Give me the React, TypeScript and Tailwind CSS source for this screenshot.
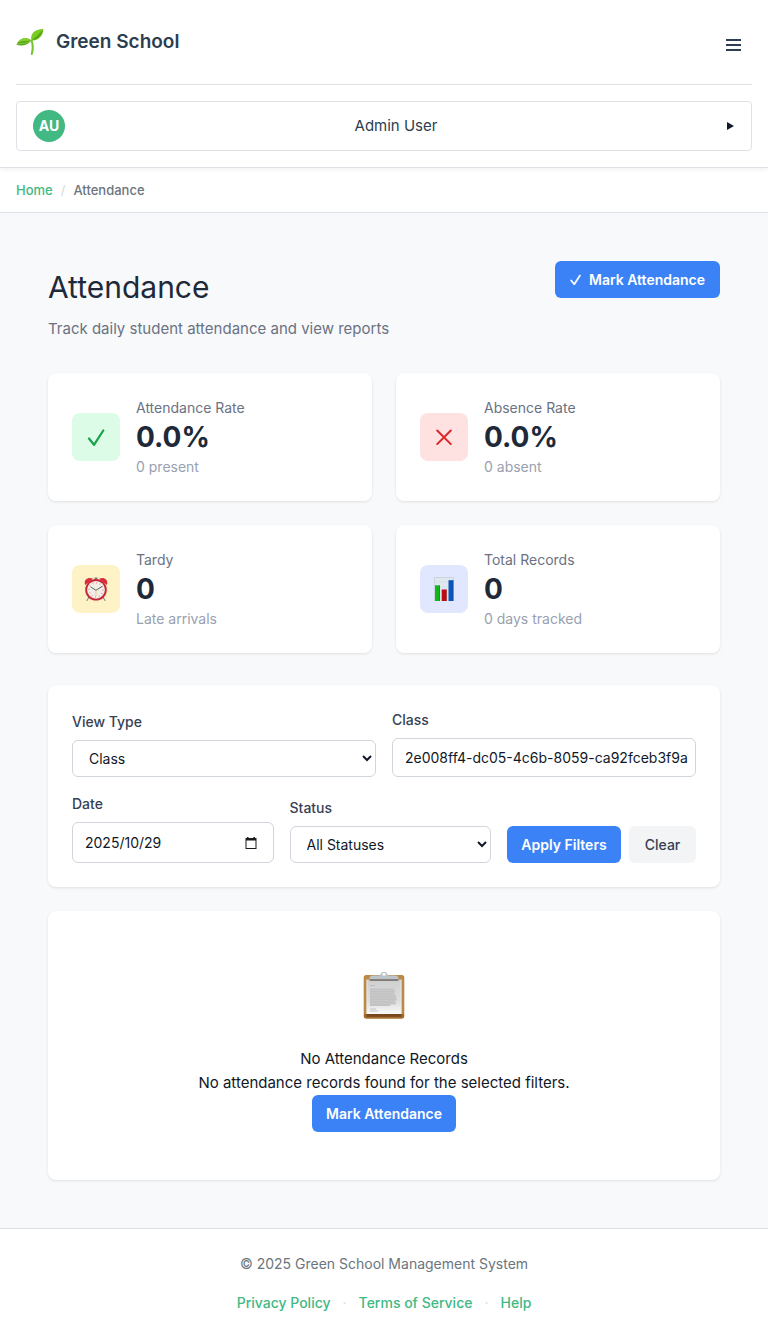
import { useState, type ReactNode } from 'react';

function SeedlingIcon() {
  return (
    <svg className="h-7 w-7" viewBox="0 0 28 28" aria-hidden="true">
      <path d="M15.800 26c1.100-4 1.200-9-.1-13.200" fill="none" stroke="#72c22a" strokeWidth="2" strokeLinecap="round" />
      <path d="M15.600 12.600C12 9 4.500 8.500.4 16.800c5.200 1.600 11.100.9 15.200-4.200Z" fill="#58a816" />
      <path d="M15.600 12.400C11.500 8.500 5 9 1 15c4-2 9-2.600 14.600-2.600Z" fill="#85d02c" />
      <path d="M15.400 12.600C14.200 6 18 1 27.300.9c.2 6-3.900 11.600-11.900 11.700Z" fill="#7ccb22" />
      <path d="M15.600 12.200C19.500 9.500 23.500 6 26.800 1.500c-.6 5.500-4.300 9.900-11.200 10.700Z" fill="#55a714" />
      <path d="M1.500 16c4.500-.3 9.600-.900 14-3.300" fill="none" stroke="#a3d95c" strokeWidth=".6" />
    </svg>
  );
}

function CheckIcon({ className }: { className: string }) {
  return (
    <svg className={className} viewBox="0 0 18 18" fill="none" stroke="currentColor" strokeLinecap="round" strokeLinejoin="round" aria-hidden="true">
      <path d="M2 10.500 7 16.800 16.300 2.500" />
    </svg>
  );
}

function CrossIcon() {
  return (
    <svg className="h-4 w-4" viewBox="0 0 16 16" fill="none" stroke="currentColor" strokeLinecap="round" aria-hidden="true">
      <path d="m1.200 1.500 13.600 13.600M14.800 1.500 1.200 15.100" strokeWidth="2" />
    </svg>
  );
}

function ClockIcon() {
  return (
    <svg className="h-6 w-6" viewBox="0 0 24 24" aria-hidden="true">
      <path d="m5 20-2 3.500M19 20l2 3.500" stroke="#8c8f96" strokeWidth="1.200" strokeLinecap="round" />
      <path d="M1.200 8C-.8 3.500 3.500-1 9 1.800ZM22.800 8C24.800 3.500 20.500-1 15 1.800Z" fill="#dc2c3c" />
      <path d="M10.500 .5h3v2.500h-3z" fill="#777b82" />
      <circle cx="12" cy="12.800" r="10.800" fill="#c52836" />
      <circle cx="12" cy="12.800" r="8.900" fill="#f1eee8" />
      <circle cx="12" cy="12.800" r="7" fill="none" stroke="#ec8c91" strokeWidth="1.700" strokeDasharray=".7 2.965" />
      <path d="m7 10.200 5 3.100 6-3.800" fill="none" stroke="#4c4f50" strokeWidth=".9" strokeLinecap="round" />
      <path d="M12 13.500V19" stroke="#e6b65d" strokeWidth=".6" />
    </svg>
  );
}

function ChartIcon() {
  return (
    <svg className="h-6 w-5" viewBox="0 0 20 24" aria-hidden="true">
      <path d="M0 0h20v24H0z" fill="#dfe7ef" />
      <path d="M0 .5h20M.5 0v24M19.500 0v4" stroke="#c9d4dc" strokeWidth="1" />
      <path d="M0 5h20M0 10h20M0 15h20M0 20h20" stroke="#d2dde7" strokeWidth=".6" />
      <path d="M1 8.300h5V24H1z" fill="#12b71b" />
      <path d="M7.700 12.500h5V24h-5z" fill="#bd0b14" />
      <path d="M14.500 3.200h5V24h-5z" fill="#0c55ba" />
      <path d="M5 8.300h1V24H5zM11.700 12.500h1V24h-1zM18.500 3.200h1V24h-1z" fill="#000" opacity=".15" />
    </svg>
  );
}

function ClipboardIcon() {
  return (
    <svg className="h-12 w-[42px]" viewBox="0 0 42 48" aria-hidden="true">
      <defs>
        <linearGradient id="paper" x2="0" y2="1">
          <stop stopColor="#cfcfd0" />
          <stop offset=".65" stopColor="#dedee0" />
          <stop offset="1" stopColor="#fafafa" />
        </linearGradient>
      </defs>
      <rect x=".7" y="4" width="40.600" height="43.500" rx="2.500" fill="#ba8a47" />
      <path d="M1 43h40v2.500a2 2 0 0 1-2 2H3a2 2 0 0 1-2-2Z" fill="#a06d31" />
      <path d="M3.600 43h34.800v2.800H3.600z" fill="#77491d" />
      <path d="M3.600 8.500h34.800V43H3.600z" fill="url(#paper)" />
      <path d="M4 9v34M38 9v34" stroke="#eeeeef" strokeWidth=".8" />
      <path d="M6.500 9V7.500c0-2 1.500-3.100 3-3.100h6.500C18 4.400 17.500.7 21 .7s3 3.700 5 3.700h6.500c1.500 0 3 1.100 3 3.100V9Z" fill="#bcc3c9" />
      <path d="M6.500 8.300h29v1.500h-29z" fill="#6e6660" />
      <circle cx="21" cy="3.300" r="1.500" fill="#fff" />
      <path d="M7 14.500h5M7 38h6M7 40h8" stroke="#b8b8ba" strokeWidth=".8" />
      <path d="M7 17.500h24v2h1v2h-1v2h2v4h1v2h-2v2h1v2h-6v1.500H7Z" fill="#c3c3c5" />
      <path d="M7 19.500h25M7 22h25M7 24.500h26M7 27h25M7 29.500h26M7 32h25" stroke="#cececf" strokeWidth=".5" />
    </svg>
  );
}

function CalendarIcon() {
  return (
    <svg className="h-3 w-3 shrink-0" viewBox="0 0 12 12" aria-hidden="true">
      <path d="M2 0h1.500v1h5V0H10v1h1.500v11H.5V1H2Zm-.5 3.500V11h9V3.500Z" fill="#1b1b1b" fillRule="evenodd" />
    </svg>
  );
}

type StatProps = { label: string; value: string; note: string; tile: string; icon: ReactNode };

function StatCard({ label, value, note, tile, icon }: StatProps) {
  return (
    <section className="flex items-center gap-4 rounded-lg bg-white p-6 shadow-[0_1px_3px_rgba(0,0,0,0.1)]">
      <div className={`flex h-12 w-12 shrink-0 items-center justify-center rounded-lg ${tile}`}>{icon}</div>
      <div>
        <p className="mb-1 text-sm leading-[21px] text-gray-500">{label}</p>
        <p className="text-[28px] leading-[30px] font-bold text-gray-800">{value}</p>
        <p className="mt-1 text-sm leading-[21px] text-gray-400">{note}</p>
      </div>
    </section>
  );
}

const label = 'text-sm leading-[21px] font-medium text-gray-700';
const field = 'w-full min-w-0 rounded-md border border-gray-300 bg-white text-sm text-gray-900';
const primary = 'h-[37px] rounded-md bg-[#3b82f6] text-sm font-semibold text-white';
const link = 'font-medium text-[#42b883]';

export default function App() {
  const [view, setView] = useState('Class');
  const [classId, setClassId] = useState('2e008ff4-dc05-4c6b-8059-ca92fceb3f9a');
  const [date, setDate] = useState('2025/10/29');
  const [status, setStatus] = useState('All Statuses');

  return (
    <div className="flex min-h-screen flex-col bg-[#f8f9fb] font-['Inter','Liberation_Sans',sans-serif] text-gray-900">
      <header className="relative border-b border-[#dee2e6] bg-white p-4 shadow-[0_2px_4px_rgba(0,0,0,0.05)]">
        <div className="flex h-[69px] items-start justify-between border-b border-[#dee2e6]">
          <a href="#home" className="flex h-[52px] items-center gap-3 text-[19px] font-semibold text-[#2c3e50]">
            <SeedlingIcon />
            Green School
          </a>
          <button aria-label="Open menu" className="flex h-[58px] w-[37px] items-center justify-center text-[#2c3e50]">
            <svg className="h-3 w-[15px]" viewBox="0 0 15 12" aria-hidden="true">
              <path d="M0 1h15M0 6h15M0 11h15" stroke="currentColor" strokeWidth="2" />
            </svg>
          </button>
        </div>
        <button className="mt-4 flex h-[50px] w-full items-center justify-between rounded border border-[#dee2e6] px-4">
          <span className="flex h-8 w-8 items-center justify-center rounded-full bg-[#42b883] text-sm font-bold text-white">AU</span>
          <span className="text-[15px] text-[#2c3e50]">Admin User</span>
          <svg className="mr-px h-2 w-[7px]" viewBox="0 0 7 8" aria-hidden="true">
            <path d="m0 0 7 4-7 4Z" fill="#111827" />
          </svg>
        </button>
      </header>

      <nav aria-label="Breadcrumb" className="flex h-[45px] items-center gap-2 border-b border-[#dee2e6] bg-white px-4 pt-0.5 text-[13px]">
        <a href="#home" className={link}>Home</a>
        <span className="text-[#d5dade]">/</span>
        <span className="font-medium text-[#6c757d]">Attendance</span>
      </nav>

      <main className="grow p-12">
        <div className="flex items-start justify-between">
          <div>
            <h1 className="pt-1 text-[30px] leading-[44px] text-gray-800">Attendance</h1>
            <p className="mt-2 text-[15px] leading-6 text-gray-500">Track daily student attendance and view reports</p>
          </div>
          <button className={`flex w-[165px] items-center justify-center gap-2 ${primary}`}>
            <CheckIcon className="h-[11px] w-[11px] stroke-[2.8]" />
            Mark Attendance
          </button>
        </div>

        <div className="mt-8 grid grid-cols-2 gap-6">
          <StatCard label="Attendance Rate" value="0.0%" note="0 present" tile="bg-[#dcfce7] text-[#16a34a]" icon={<CheckIcon className="h-[18px] w-[18px] stroke-[2.2]" />} />
          <StatCard label="Absence Rate" value="0.0%" note="0 absent" tile="bg-[#fee2e2] text-[#dc2626]" icon={<CrossIcon />} />
          <StatCard label="Tardy" value="0" note="Late arrivals" tile="bg-[#fef3c7]" icon={<ClockIcon />} />
          <StatCard label="Total Records" value="0" note="0 days tracked" tile="bg-[#e0e7ff]" icon={<ChartIcon />} />
        </div>

        <form className="mt-8 flex flex-col gap-4 rounded-lg bg-white p-6 shadow-[0_1px_3px_rgba(0,0,0,0.1)]" onSubmit={(e) => e.preventDefault()}>
          <div className="flex items-end gap-4">
            <div className="flex min-w-0 flex-1 flex-col gap-2">
              <label htmlFor="view" className={label}>View Type</label>
              <select id="view" className={`h-[37px] px-3 ${field}`} value={view} onChange={(e) => setView(e.target.value)}>
                <option>Class</option>
                <option>Student</option>
              </select>
            </div>
            <div className="flex min-w-0 flex-1 flex-col gap-2">
              <label htmlFor="class" className={label}>Class</label>
              <input id="class" className={`h-[39px] pr-1 pl-3 ${field}`} value={classId} onChange={(e) => setClassId(e.target.value)} />
            </div>
          </div>
          <div className="flex items-end gap-4">
            <div className="flex min-w-0 flex-1 flex-col gap-2">
              <label htmlFor="date" className={label}>Date</label>
              <div className={`flex h-[41px] items-center pr-4 pl-3 ${field}`}>
                <input id="date" className="h-full w-full min-w-0" value={date} onChange={(e) => setDate(e.target.value)} />
                <CalendarIcon />
              </div>
            </div>
            <div className="flex min-w-0 flex-1 flex-col gap-2">
              <label htmlFor="status" className={label}>Status</label>
              <select id="status" className={`h-[37px] px-3 ${field}`} value={status} onChange={(e) => setStatus(e.target.value)}>
                <option>All Statuses</option>
                <option>Present</option>
                <option>Absent</option>
                <option>Tardy</option>
              </select>
            </div>
            <div className="flex gap-2">
              <button type="submit" className={`w-[114px] ${primary}`}>Apply Filters</button>
              <button type="reset" className="h-[37px] w-[67px] rounded-md bg-gray-100 text-sm font-medium text-gray-700">Clear</button>
            </div>
          </div>
        </form>

        <section className="mt-6 flex flex-col items-center rounded-lg bg-white px-6 pt-[60px] pb-12 text-center text-[15px] leading-6 shadow-[0_1px_3px_rgba(0,0,0,0.1)]">
          <ClipboardIcon />
          <h2 className="mt-7">No Attendance Records</h2>
          <p>No attendance records found for the selected filters.</p>
          <button className={`w-36 ${primary}`}>Mark Attendance</button>
        </section>
      </main>

      <footer className="flex flex-col items-center gap-[17px] border-t border-[#dee2e6] bg-white pt-6 pb-[25px] text-sm leading-[22px]">
        <p className="text-[#6c757d]">© 2025 Green School Management System</p>
        <div className="flex gap-3">
          <a href="#privacy" className={link}>Privacy Policy</a>
          <span className="text-[#d5dade]">·</span>
          <a href="#terms" className={link}>Terms of Service</a>
          <span className="text-[#d5dade]">·</span>
          <a href="#help" className={link}>Help</a>
        </div>
      </footer>
    </div>
  );
}
